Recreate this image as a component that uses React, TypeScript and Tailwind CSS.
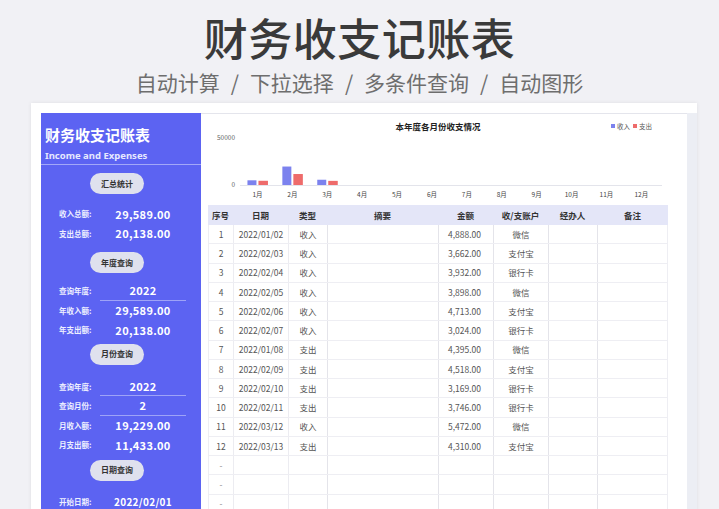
import React from "react";

const FONT = "font-['Noto_Sans_CJK_SC','Noto_Sans',sans-serif]";

const ROWS = [
  ["1", "2022/01/02", "收入", "4,888.00", "微信"],
  ["2", "2022/02/03", "收入", "3,662.00", "支付宝"],
  ["3", "2022/02/04", "收入", "3,932.00", "银行卡"],
  ["4", "2022/02/05", "收入", "3,898.00", "微信"],
  ["5", "2022/02/06", "收入", "4,713.00", "支付宝"],
  ["6", "2022/02/07", "收入", "3,024.00", "银行卡"],
  ["7", "2022/01/08", "支出", "4,395.00", "微信"],
  ["8", "2022/02/09", "支出", "4,518.00", "支付宝"],
  ["9", "2022/02/10", "支出", "3,169.00", "银行卡"],
  ["10", "2022/02/11", "支出", "3,746.00", "银行卡"],
  ["11", "2022/03/12", "收入", "5,472.00", "微信"],
  ["12", "2022/03/13", "支出", "4,310.00", "支付宝"],
];

// monthly totals [income, expense]
const MONTHS: [number, number][] = [
  [4888, 4395], [19229, 11433], [5472, 4310],
  [0, 0], [0, 0], [0, 0], [0, 0], [0, 0], [0, 0], [0, 0], [0, 0], [0, 0],
];

const GRID = "grid grid-cols-[25px_55px_39px_111px_55px_55px_49px_71px]";

function Pill({ label, mt }: { label: string; mt: string }) {
  return (
    <div className={`${mt} ml-[49px] w-[54px] h-[21px] rounded-full bg-[#dfe1ee] flex items-center justify-center text-[8px] font-bold text-[#333]`}>
      {label}
    </div>
  );
}

function Stat({ label, value, line, small }: { label: string; value: string; line?: boolean; small?: boolean }) {
  return (
    <div className="flex h-[19.5px] items-stretch">
      <div className="w-[59px] pl-[18px] flex items-center text-[7.5px] font-bold text-[#eef0ff]">{label}</div>
      <div
        className={`w-[86px] flex items-center justify-center font-bold text-white ${small ? "text-[10px]" : "text-[11px]"} tracking-[0.3px] ${
          line ? "border-b border-[#9ea3f7]" : ""
        }`}
      >
        {value}
      </div>
    </div>
  );
}

function Chart() {
  const x0 = 32;
  const cw = 34.9;
  const base = 71;
  const k = 48 / 50000;
  return (
    <svg width="460" height="91" className="block">
      <text x="230" y="16" textAnchor="middle" fontSize="8.5" fontWeight="700" fill="#222" fontFamily="Noto Sans CJK SC, sans-serif">
        本年度各月份收支情况
      </text>
      <rect x="403" y="10" width="4" height="4" fill="#7c82ee" />
      <text x="409" y="14.5" fontSize="6.5" fill="#555" fontFamily="Noto Sans CJK SC, sans-serif">收入</text>
      <rect x="425" y="10" width="4" height="4" fill="#ee6b6b" />
      <text x="431" y="14.5" fontSize="6.5" fill="#555" fontFamily="Noto Sans CJK SC, sans-serif">支出</text>
      <text x="27" y="25.5" textAnchor="end" fontSize="6.5" fill="#666" fontFamily="Noto Sans CJK SC, sans-serif">50000</text>
      <text x="27" y="73" textAnchor="end" fontSize="6.5" fill="#666" fontFamily="Noto Sans CJK SC, sans-serif">0</text>
      <line x1={x0} x2="454" y1={base + 0.5} y2={base + 0.5} stroke="#e3e4eb" strokeWidth="1" />
      {MONTHS.map(([inc, exp], i) => {
        const c = x0 + cw / 2 + cw * i;
        const hi = inc * k;
        const he = exp * k;
        return (
          <g key={i}>
            {hi > 0 && <rect x={c - 10} y={base - hi} width="9" height={hi} fill="#7c82ee" />}
            {he > 0 && <rect x={c + 1} y={base - he} width="9.5" height={he} fill="#ee6b6b" />}
            <text x={c} y="82.5" textAnchor="middle" fontSize="6.5" fill="#444" fontFamily="Noto Sans CJK SC, sans-serif">
              {i + 1}月
            </text>
          </g>
        );
      })}
    </svg>
  );
}

export default function App() {
  const blanks = Array.from({ length: 5 });
  return (
    <div className={`w-[719px] h-[509px] overflow-hidden bg-[#f1f1f5] ${FONT}`}>
      {/* Heading */}
      <h1 className="mt-[11px] h-[52px] leading-[52px] text-center text-[44px] font-medium text-[#3a3a3a] tracking-[0.5px]">
        财务收支记账表
      </h1>
      <div className="mt-[5px] h-[28px] leading-[28px] flex justify-center text-[21px] text-[#6e6e6e]">
        <span>自动计算</span>
        <span className="mx-[11px]">/</span>
        <span>下拉选择</span>
        <span className="mx-[11px]">/</span>
        <span>多条件查询</span>
        <span className="mx-[11px]">/</span>
        <span>自动图形</span>
      </div>

      {/* Sheet card */}
      <div className="mt-[7px] ml-[31px] w-[666px] h-[420px] bg-white pt-[10px] pl-[10px] shadow-[0_0_4px_rgba(0,0,0,0.08)] flex">
        {/* Left summary panel */}
        <div className="w-[160px] shrink-0 bg-[#5c63f2]">
          <div className="pt-[12px] pl-[4px] h-[20px] leading-[20px] text-[15px] font-bold text-white box-content">财务收支记账表</div>
          <div className="mt-[5px] pl-[4px] h-[12px] leading-[12px] text-[9.5px] font-bold text-[#e6e8ff] font-['Noto_Sans',sans-serif]">
            Income and Expenses
          </div>
          <div className="mt-[2px] border-b border-[#a3a8f8]" />

          <Pill label="汇总统计" mt="mt-[8px]" />
          <div className="mt-[10px]">
            <Stat label="收入总额:" value="29,589.00" />
            <Stat label="支出总额:" value="20,138.00" />
          </div>

          <Pill label="年度查询" mt="mt-[9px]" />
          <div className="mt-[8px]">
            <Stat label="查询年度:" value="2022" line />
            <Stat label="年收入额:" value="29,589.00" />
            <Stat label="年支出额:" value="20,138.00" />
          </div>

          <Pill label="月份查询" mt="mt-[4px]" />
          <div className="mt-[12px]">
            <Stat label="查询年度:" value="2022" line />
            <Stat label="查询月份:" value="2" line />
            <Stat label="月收入额:" value="19,229.00" />
            <Stat label="月支出额:" value="11,433.00" />
          </div>

          <Pill label="日期查询" mt="mt-[5px]" />
          <div className="mt-[11px]">
            <Stat label="开始日期:" value="2022/02/01" small />
          </div>
        </div>

        {/* Chart + table */}
        <div className="w-[486px] shrink-0 border-t border-[#e4e5ec] pl-[7px]">
          <Chart />
          <div className="w-[460px] text-[8.5px] text-[#555]">
            <div className={`${GRID} h-[20px] bg-[#e4e6f8] font-bold text-[#333]`}>
              {["序号", "日期", "类型", "摘要", "金额", "收/支账户", "经办人", "备注"].map(h => (
                <div key={h} className="flex items-center justify-center">{h}</div>
              ))}
            </div>
            {ROWS.map(r => (
              <div key={r[0]} className={`${GRID} h-[19.25px] border-b border-[#eeeef3] border-l border-r`}>
                <div className="flex items-center justify-center border-r border-[#ececf1]">{r[0]}</div>
                <div className="flex items-center justify-center border-r border-[#ececf1]">{r[1]}</div>
                <div className="flex items-center justify-center border-r border-[#e4e4ea]">{r[2]}</div>
                <div className="border-r border-[#e4e4ea]" />
                <div className="flex items-center justify-end pr-[12px] border-r border-[#e4e4ea]">{r[3]}</div>
                <div className="flex items-center justify-center border-r border-[#e4e4ea]">{r[4]}</div>
                <div className="border-r border-[#e4e4ea]" />
                <div />
              </div>
            ))}
            {blanks.map((_, i) => (
              <div key={i} className={`${GRID} h-[19.25px] border-b border-[#eeeef3] border-l border-r`}>
                <div className="flex items-center justify-center border-r border-[#ececf1] text-[#888]">-</div>
                <div className="border-r border-[#ececf1]" />
                <div className="border-r border-[#e4e4ea]" />
                <div className="border-r border-[#e4e4ea]" />
                <div className="border-r border-[#e4e4ea]" />
                <div className="border-r border-[#e4e4ea]" />
                <div className="border-r border-[#e4e4ea]" />
                <div />
              </div>
            ))}
          </div>
        </div>

        <div className="w-[10px] shrink-0 bg-[#eceef4]" />
      </div>
    </div>
  );
}
